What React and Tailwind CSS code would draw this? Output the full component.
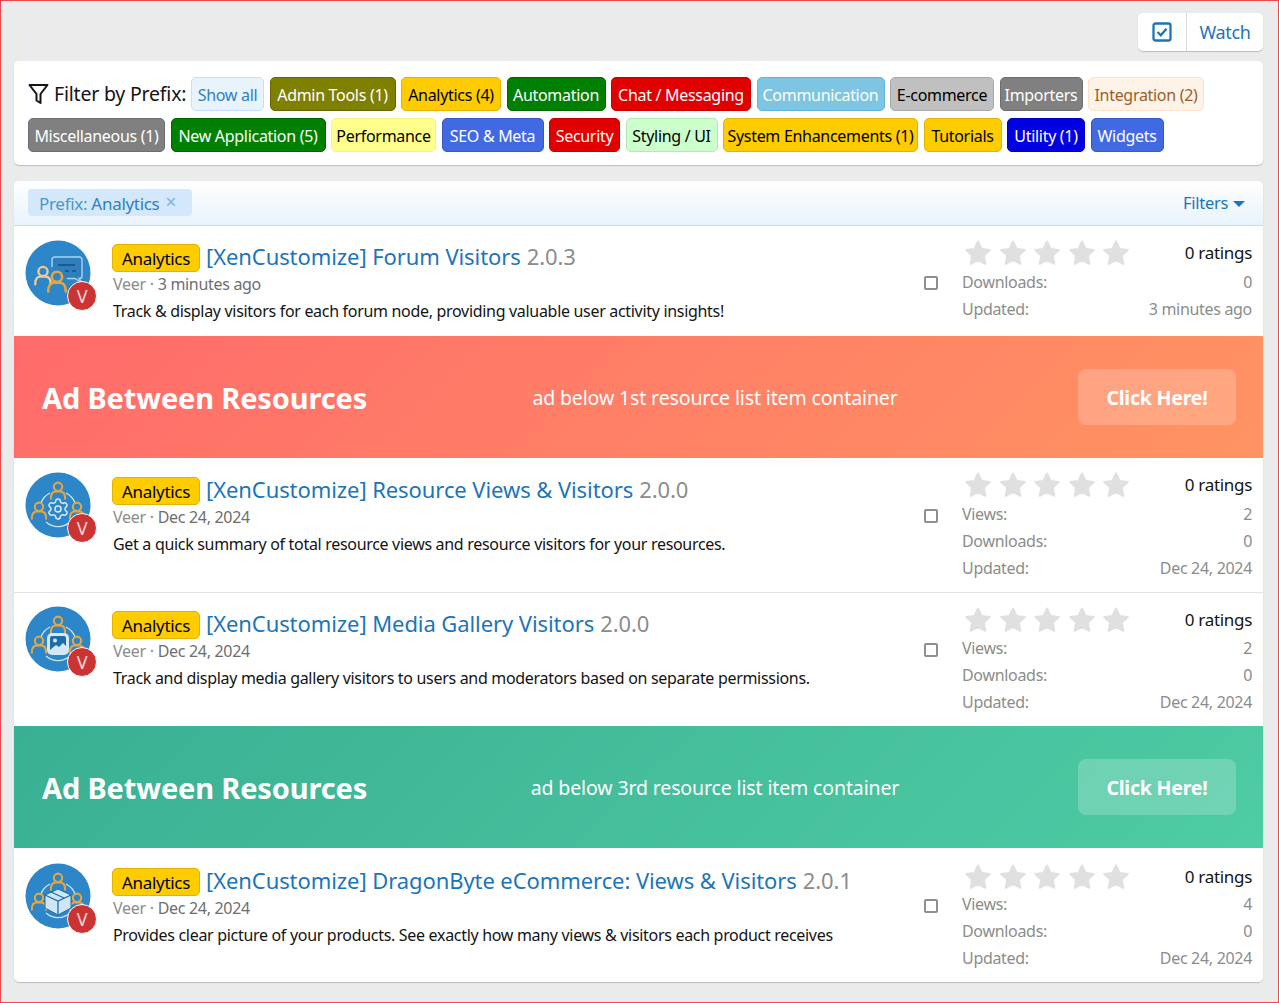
import React from "react";
import { Settings } from "lucide-react";

const chipRow1 = [
  ["Admin Tools (1)", "w-[126px] bg-[#808000] border-[#666600] text-white"],
  ["Analytics (4)", "w-[100px] bg-[#ffcc00] border-[#e0b400] text-black"],
  ["Automation", "w-[99px] bg-[#008000] border-[#006600] text-white"],
  ["Chat / Messaging", "w-[140px] bg-[#e00000] border-[#c80000] text-white"],
  ["Communication", "w-[128px] bg-[#7ec4e3] border-[#62b4da] text-white"],
  ["E-commerce", "w-[104px] bg-[#c0c0c0] border-[#a8a8a8] text-black"],
  ["Importers", "w-[83px] bg-[#808080] border-[#6e6e6e] text-white"],
  ["Integration (2)", "w-[116px] bg-[#fef3e6] border-[#fbe3c8] text-[#98622a]"],
];
const chipRow2 = [
  ["Miscellaneous (1)", "w-[137px] bg-[#808080] border-[#6e6e6e] text-white"],
  ["New Application (5)", "w-[155px] bg-[#008000] border-[#006600] text-white"],
  ["Performance", "w-[105px] bg-[#ffff8c] border-[#f5f57c] text-black"],
  ["SEO & Meta", "w-[102px] bg-[#4169e1] border-[#3559c8] text-white"],
  ["Security", "w-[71px] bg-[#e00000] border-[#c80000] text-white"],
  ["Styling / UI", "w-[92px] bg-[#ccffcc] border-[#b0ecb0] text-black"],
  ["System Enhancements (1)", "w-[195px] bg-[#ffcc00] border-[#e0b400] text-black"],
  ["Tutorials", "w-[78px] bg-[#ffcc00] border-[#e0b400] text-black"],
  ["Utility (1)", "w-[78px] bg-[#0000e0] border-[#0000c8] text-white"],
  ["Widgets", "w-[73px] bg-[#4169e1] border-[#3559c8] text-white"],
];

function Chip({ label, cls }) {
  return (
    <span className={`h-[34px] pt-[2px] flex items-center justify-center rounded-[5px] border whitespace-nowrap text-[16px] tracking-[-0.3px] ${cls}`}>
      {label}
    </span>
  );
}

function Person({ x, y, s = 1, color = "#e6a53f" }) {
  return (
    <g transform={`translate(${x} ${y}) scale(${s})`} fill="none" stroke={color} strokeWidth="1.900" strokeLinecap="round">
      <circle cx="0" cy="-3.800" r="3.800" />
      <path d="M-6.500 7 C-6.500 1.500 -4 0.500 -2 0.500 L2 0.500 C4 0.500 6.500 1.500 6.500 7" />
    </g>
  );
}

function Avatar({ kind }) {
  const ring = (
    <>
      <path d="M16 31 A18 18 0 0 1 25 21" fill="none" stroke="#cfe6f7" strokeWidth="1.300" />
      <path d="M41 21 A18 18 0 0 1 50 31" fill="none" stroke="#cfe6f7" strokeWidth="1.300" />
      <path d="M21 50 A18 18 0 0 0 45 50" fill="none" stroke="#cfe6f7" strokeWidth="1.300" />
      <Person x={33} y={19} s={1.1} />
      <Person x={14} y={39} s={1.1} />
      <Person x={52} y={39} s={1.1} />
    </>
  );
  return (
    <div className="relative w-[72px] h-[72px] shrink-0">
      <svg width="66" height="66" viewBox="0 0 66 66" className="block">
        <circle cx="33" cy="33" r="32.500" fill="#2c86c8" />
        {kind === "chat" && (
          <>
            <path d="M27 27 L27 20 Q27 17 30 17 L54 17 Q57 17 57 20 L57 36 Q57 38.500 54.500 38.500 L54 38.500 L57 43 L50 38.500 L42 38.500" fill="#2f7fbc" stroke="#a9d3f0" strokeWidth="1.400" />
            <path d="M33 25 H50" stroke="#174f80" strokeWidth="1.500" />
            <path d="M40 31 H44 M47 31 H51" stroke="#174f80" strokeWidth="1.500" />
            <Person x={18} y={36} s={1.2} color="#f2c992" />
            <Person x={32} y={42} s={1.35} color="#e6a53f" />
          </>
        )}
        {kind === "gear" && (
          <>
            {ring}
            <Settings x={21} y={25} size={24} color="#d8ecfa" strokeWidth={1.500} />
          </>
        )}
        {kind === "image" && (
          <>
            {ring}
            <rect x="22" y="27" width="22" height="22" rx="5" fill="#d2e9fa" />
            <rect x="25" y="30" width="16" height="16" rx="2" fill="#1f6ca8" />
            <circle cx="30" cy="34.500" r="2" fill="#d2e9fa" />
            <path d="M25 44 L31 39 L34 41 L38 37 L41 40 L41 46 L25 46 Z" fill="#d2e9fa" />
          </>
        )}
        {kind === "box" && (
          <>
            {ring}
            <path d="M33 26 L46 32 L46 45 L33 52 L20 45 L20 32 Z" fill="#cfe6f8" stroke="#1f6ca8" strokeWidth="1" />
            <path d="M20 32 L33 38 L46 32 M33 38 L33 52" fill="none" stroke="#1f6ca8" strokeWidth="1.300" />
            <path d="M26 29 L39 35" stroke="#1f6ca8" strokeWidth="1.300" />
          </>
        )}
      </svg>
      <div className="absolute left-[42px] top-[41px] w-[30px] h-[30px] rounded-full bg-[#cc3333] border border-white flex items-center justify-center text-[#f5d5d5] text-[18px]">
        V
      </div>
    </div>
  );
}

function Star() {
  return (
    <svg width="30" height="30" viewBox="0 0 30 30" className="block">
      <path d="M15 3.500 L18.600 11 L26.800 12 L20.800 17.600 L22.300 25.800 L15 21.800 L7.700 25.800 L9.200 17.600 L3.200 12 L11.400 11 Z" fill="#e0e0e0" stroke="#e0e0e0" strokeWidth="2" strokeLinejoin="round" />
    </svg>
  );
}

function Stat({ label, value }) {
  return (
    <div className="flex justify-between h-[27px] items-center text-[#8c8c8c]">
      <span>{label}</span>
      <span>{value}</span>
    </div>
  );
}

function Row({ kind, title, version, date, desc, views, updated, h, avatarPt, textPt, checkPt, starsPt, statMt, border }) {
  return (
    <div className={`flex bg-white pl-[11px] ${h} ${border ? "border-b border-[#e3e3e3]" : ""}`}>
      <div className={`${avatarPt} w-[87px] shrink-0`}>
        <Avatar kind={kind} />
      </div>
      <div className={`${textPt} w-[812px] shrink-0 min-w-0`}>
        <div className="flex items-center h-[28px]">
          <span className="h-[28px] w-[88px] mt-[3px] pt-[2px] flex items-center justify-center rounded-[5px] bg-[#ffcc00] border border-[#e0b400] text-[17px] tracking-[-0.3px] text-black">Analytics</span>
          <span className="ml-[6px] text-[22px] tracking-[-0.08px] text-[#1c75b8] whitespace-nowrap">{title}</span>
          <span className="ml-[6px] text-[22px] tracking-[-0.08px] text-[#8c8c8c] whitespace-nowrap">{version}</span>
        </div>
        <div className="mt-[2px] h-[24px] pl-[1px] flex items-center text-[#8c8c8c] whitespace-nowrap">
          Veer<span className="mx-[4px]">·</span><span className="text-[#6e6e6e]">{date}</span>
        </div>
        <div className="mt-[3px] h-[24px] pl-[1px] flex items-center text-[#141414] whitespace-nowrap">{desc}</div>
      </div>
      <div className={`shrink-0 w-[38px] ${checkPt}`}>
        <div className="w-[14px] h-[14px] rounded-[2px] border-2 border-[#8f8f8f] bg-white" />
      </div>
      <div className={`w-[290px] shrink-0 ${starsPt}`}>
        <div className="flex justify-between items-center h-[30px]">
          <div className="flex gap-[4.500px] ml-[1px]">
            <Star /><Star /><Star /><Star /><Star />
          </div>
          <span className="text-[#141414] text-[17px]">0 ratings</span>
        </div>
        <div className={statMt}>
          {views !== undefined && <Stat label="Views:" value={views} />}
          <Stat label="Downloads:" value="0" />
          <Stat label="Updated:" value={updated} />
        </div>
      </div>
    </div>
  );
}

function Ad({ sub, bg }) {
  return (
    <div className={`h-[122px] flex items-center justify-between pl-[28px] pr-[27px] text-white ${bg}`}>
      <span className="pt-[2px] text-[29px] font-bold tracking-[-0.15px] w-[310px] whitespace-nowrap">Ad Between Resources</span>
      <span className="pt-[2px] text-[19.500px] tracking-[-0.13px] whitespace-nowrap">{sub}</span>
      <span className="pt-[2px] w-[158px] h-[56px] rounded-[8px] bg-white/20 flex items-center justify-center text-[19.500px] font-bold tracking-[-0.2px]">Click Here!</span>
    </div>
  );
}

export default function App() {
  return (
    <div className="w-[1279px] h-[1003px] overflow-hidden bg-[#ebebeb] border border-[#f04848] pl-[13px] pr-[15px] pt-[12px] text-[16px] tracking-[-0.31px]" style={{ fontFamily: '"Noto Sans", sans-serif' }}>
      <div className="flex justify-end">
        <div className="flex h-[38px] w-[125px] bg-white rounded-[5px] shadow-[0_1px_1px_rgba(0,0,0,0.2)] text-[#1c75b8] text-[18px]">
          <div className="w-[49px] flex items-center justify-center border-r border-[#dcdcdc]">
            <svg width="20" height="20" viewBox="0 0 20 20">
              <rect x="1.500" y="1.500" width="17" height="17" rx="2" fill="none" stroke="#1c75b8" strokeWidth="2.300" />
              <path d="M5.500 10 L8.800 13.300 L14.500 6.800" fill="none" stroke="#1c75b8" strokeWidth="2.300" />
            </svg>
          </div>
          <div className="flex-1 flex items-center justify-center">Watch</div>
        </div>
      </div>

      <div className="mt-[10px] h-[104px] bg-white rounded-[5px] shadow-[0_1px_1px_rgba(0,0,0,0.2)] pl-[14px] pt-[16px]">
        <div className="flex items-center gap-[5.500px]">
          <span className="flex items-center w-[157.500px] text-[19.500px] tracking-[-0.2px] text-[#141414] whitespace-nowrap">
            <svg width="21" height="24" viewBox="0 0 21 24" className="mr-[5px] shrink-0">
              <path d="M1.500 3 H19.500 L12.500 12 V21 L8.500 18.500 V12 Z" fill="none" stroke="#141414" strokeWidth="2" strokeLinejoin="round" />
            </svg>
            Filter by Prefix:
          </span>
          <Chip label="Show all" cls="w-[73px] bg-[#e8f3fc] border-[#c3e0f7] text-[#2f80c2]" />
          {chipRow1.map(([l, c]) => <Chip key={l} label={l} cls={c} />)}
        </div>
        <div className="flex items-center gap-[5.500px] mt-[7px]">
          {chipRow2.map(([l, c]) => <Chip key={l} label={l} cls={c} />)}
        </div>
      </div>

      <div className="mt-[16px] rounded-[5px] overflow-hidden shadow-[0_1px_1px_rgba(0,0,0,0.2)]">
        <div className="h-[45px] flex items-center justify-between pl-[14px] pr-[18px] bg-gradient-to-b from-white to-[#e8f3fc] border-b border-[#d3dbe3]">
          <span className="h-[27px] w-[164px] pl-[11px] rounded-[4px] bg-[#d3e8fa] flex items-center text-[#2f80c2] text-[17px] tracking-[-0.3px] pt-[3px] mt-[-1px]">
            <span className="text-[#4a96d0]">Prefix:</span>&nbsp;Analytics<span className="ml-[6px] text-[#7eb4de] text-[19px] leading-none mt-[-3px]">×</span>
          </span>
          <span className="flex items-center text-[#1c75b8] text-[16.500px] pt-[1px]">
            Filters
            <span className="ml-[5px] w-0 h-0 border-l-[6px] border-r-[6px] border-t-[6px] border-l-transparent border-r-transparent border-t-[#1c75b8]" />
          </span>
        </div>
        <Row h="h-[110px]" avatarPt="pt-[14px]" textPt="pt-[16px]" checkPt="pt-[50px]" starsPt="pt-[12px]" statMt="mt-0" kind="chat" title="[XenCustomize] Forum Visitors" version="2.0.3" date="3 minutes ago" desc="Track & display visitors for each forum node, providing valuable user activity insights!" updated="3 minutes ago" />
        <Ad sub="ad below 1st resource list item container" bg="bg-[linear-gradient(135deg,#ff6b6b,#ff9462)]" />
        <Row h="h-[135px]" avatarPt="pt-[14px]" textPt="pt-[17px]" checkPt="pt-[51px]" starsPt="pt-[12px]" statMt="mt-0" kind="gear" border title="[XenCustomize] Resource Views & Visitors" version="2.0.0" date="Dec 24, 2024" desc="Get a quick summary of total resource views and resource visitors for your resources." views="2" updated="Dec 24, 2024" />
        <Row h="h-[133px]" avatarPt="pt-[13px]" textPt="pt-[16px]" checkPt="pt-[50px]" starsPt="pt-[12px]" statMt="mt-[-1px]" kind="image" title="[XenCustomize] Media Gallery Visitors" version="2.0.0" date="Dec 24, 2024" desc="Track and display media gallery visitors to users and moderators based on separate permissions." views="2" updated="Dec 24, 2024" />
        <Ad sub="ad below 3rd resource list item container" bg="bg-[linear-gradient(135deg,#3ab093,#4ecca3)]" />
        <Row h="h-[134px]" avatarPt="pt-[15px]" textPt="pt-[18px]" checkPt="pt-[51px]" starsPt="pt-[14px]" statMt="mt-[-2px]" kind="box" title="[XenCustomize] DragonByte eCommerce: Views & Visitors" version="2.0.1" date="Dec 24, 2024" desc="Provides clear picture of your products. See exactly how many views & visitors each product receives" views="4" updated="Dec 24, 2024" />
      </div>
    </div>
  );
}
